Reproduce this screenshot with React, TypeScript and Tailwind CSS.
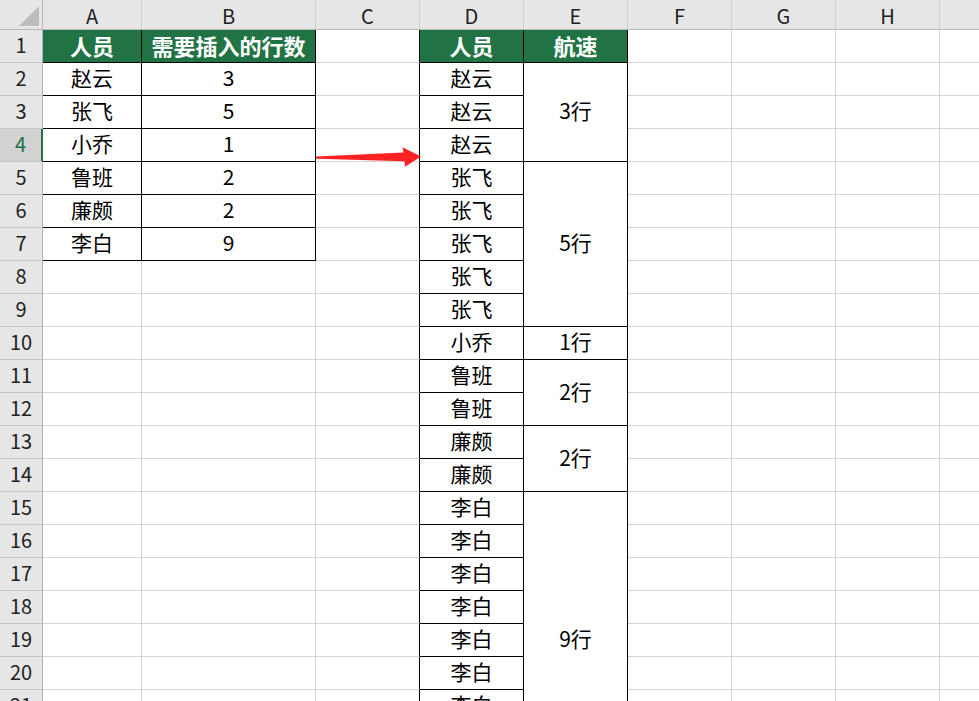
import React from "react";

type Cell = {
  text?: string;
  head?: boolean;
  span?: number;
  skip?: boolean;
};

const COLS = ["A", "B", "C", "D", "E", "F", "G", "H", "I"];
const ROW_COUNT = 23;

const leftTable: [string, string][] = [
  ["赵云", "3"],
  ["张飞", "5"],
  ["小乔", "1"],
  ["鲁班", "2"],
  ["廉颇", "2"],
  ["李白", "9"],
];

// D column: each name repeated by its row count
const expanded: string[] = leftTable.flatMap(([name, n]) =>
  Array.from({ length: Number(n) }, () => name)
);

// E column merged blocks: start row -> span
const merged: Record<number, { span: number; text: string }> = {};
{
  let r = 2;
  for (const [, n] of leftTable) {
    merged[r] = { span: Number(n), text: `${n}行` };
    r += Number(n);
  }
}
const coveredE = new Set<number>();
Object.entries(merged).forEach(([start, m]) => {
  for (let i = 1; i < m.span; i++) coveredE.add(Number(start) + i);
});

function inTable(r: number, c: number): boolean {
  if (r < 1) return false;
  if ((c === 0 || c === 1) && r <= 7) return true;
  if (c === 3 || c === 4) return true;
  return false;
}

function cellAt(r: number, c: number): Cell {
  if (r === 1) {
    if (c === 0) return { text: "人员", head: true };
    if (c === 1) return { text: "需要插入的行数", head: true };
    if (c === 3) return { text: "人员", head: true };
    if (c === 4) return { text: "航速", head: true };
    return {};
  }
  if (r <= 7 && c === 0) return { text: leftTable[r - 2][0] };
  if (r <= 7 && c === 1) return { text: leftTable[r - 2][1] };
  if (c === 3) return { text: expanded[r - 2] };
  if (c === 4) {
    if (coveredE.has(r)) return { skip: true };
    const m = merged[r];
    if (m) return { text: m.text, span: m.span };
  }
  return {};
}

const spanClass: Record<number, string> = {
  1: "",
  2: "row-span-2",
  3: "row-span-3",
  5: "row-span-5",
  9: "row-span-9",
};

function Corner() {
  return (
    <div className="relative border-r border-b border-r-[#b8b8b8] border-b-[#b8b8b8] bg-[#e6e6e6]">
      <svg className="absolute left-0 top-0" width="43" height="30" viewBox="0 0 43 30">
        <polygon points="39,6 39,26 19,26" fill="#bdbdbd" />
      </svg>
    </div>
  );
}

function ColHead({ label }: { label: string }) {
  return (
    <div className="flex items-center justify-center border-r border-b border-r-[#d0d0d0] border-b-[#b8b8b8] bg-[#e6e6e6] pt-[2px] text-[20px] leading-none text-[#222]">
      {label}
    </div>
  );
}

function RowHead({ n }: { n: number }) {
  const active = n === 4;
  return (
    <div
      className={
        active
          ? "flex items-center justify-center border-r-2 border-b border-r-[#217346] border-b-[#c4c4c4] bg-[#d2d2d2] pb-[3px] text-[20px] leading-none text-[#217346]"
          : "flex items-center justify-center border-r border-b border-r-[#b0b0b0] border-b-[#c4c4c4] bg-[#e6e6e6] pb-[3px] text-[20px] leading-none text-[#222]"
      }
    >
      {n}
    </div>
  );
}

function DataCell({ r, c, cell }: { r: number; c: number; cell: Cell }) {
  const span = cell.span ?? 1;
  const lastRow = r + span - 1;
  const rightBlack = inTable(r, c) || inTable(r, c + 1);
  const bottomBlack = inTable(lastRow, c) || inTable(lastRow + 1, c);
  const cls = [
    "flex items-center justify-center border-r border-b pb-[3px] leading-none whitespace-nowrap",
    rightBlack ? "border-r-black" : "border-r-[#d4d4d4]",
    bottomBlack ? "border-b-black" : "border-b-[#d4d4d4]",
    cell.head
      ? "bg-[#217346] text-[22px] font-bold text-white"
      : "bg-white text-[21px] text-black",
    spanClass[span] ?? "",
  ].join(" ");
  return <div className={cls}>{cell.text ?? ""}</div>;
}

export default function App() {
  const rows: number[] = Array.from({ length: ROW_COUNT }, (_, i) => i + 1);
  return (
    <div className="relative h-[701px] w-[979px] overflow-hidden bg-white font-['Noto_Sans_CJK_SC','Noto_Sans',sans-serif]">
      <div className="grid w-[1044px] grid-cols-[43px_99px_174px_104px_104px_104px_104px_104px_104px_104px] grid-rows-[30px_repeat(23,33px)]">
        <Corner />
        {COLS.map((l) => (
          <ColHead key={l} label={l} />
        ))}
        {rows.map((r) => (
          <React.Fragment key={r}>
            <RowHead n={r} />
            {COLS.map((_, c) => {
              const cell = cellAt(r, c);
              if (cell.skip) return null;
              return <DataCell key={c} r={r} c={c} cell={cell} />;
            })}
          </React.Fragment>
        ))}
      </div>

      {/* red arrow pointing from the source table to the expanded one */}
      <svg
        className="pointer-events-none absolute left-0 top-0"
        width="979"
        height="701"
        viewBox="0 0 979 701"
      >
        <polygon
          points="316,156.6 403.5,152.6 402.5,147.2 421,156.6 405,166.8 404.5,161.2 316,158.8"
          fill="#ff2222"
        />
      </svg>
    </div>
  );
}
